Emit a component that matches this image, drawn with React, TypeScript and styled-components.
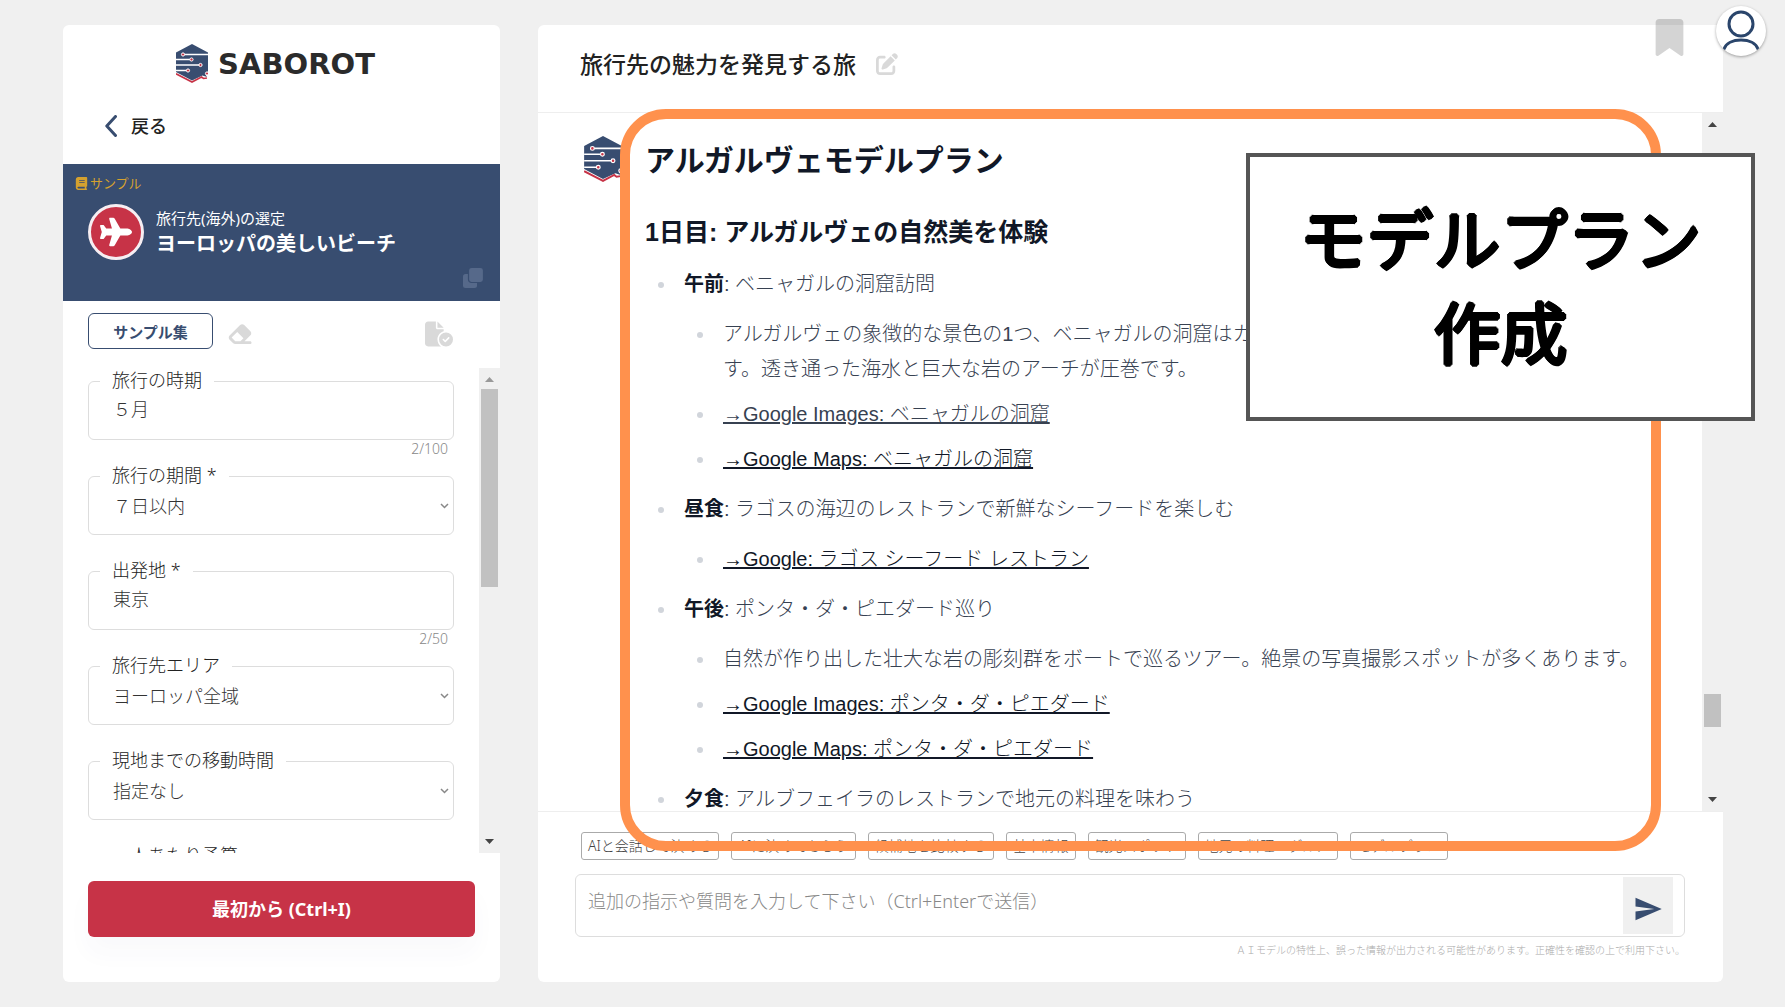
import React from "react";
import styled, { createGlobalStyle, css } from "styled-components";
import {
  FaBook,
  FaBookmark,
  FaEraser,
  FaFileCircleCheck,
  FaPenToSquare,
  FaPlane,
} from "react-icons/fa6";
import { MdSend } from "react-icons/md";

const NAVY = "#384d70";
const RED = "#c73347";
const PAGE = "#f0f0f0";
const UI_FONT = `"Noto Sans", "Noto Sans CJK JP", sans-serif`;
const CHAT_FONT = `"Liberation Sans", "Noto Sans CJK JP", sans-serif`;

const GlobalStyle = createGlobalStyle`
  *, *::before, *::after { box-sizing: border-box; }
  body {
    margin: 0;
    background: ${PAGE};
    font-family: ${UI_FONT};
    font-weight: 300;
    color: #222;
  }
  button, input, textarea, select {
    font: inherit;
    color: inherit;
    margin: 0;
  }
  button { cursor: pointer; }
`;

const Page = styled.div`
  display: flex;
  gap: 38px;
  height: 100vh;
  padding: 25px 62px 25px 63px;
  overflow: hidden;
`;

/* ---------- Logo ---------- */

const LogoMark = ({ height }: { height: number }) => (
  <svg width={Math.round((height * 32) / 39)} height={height} viewBox="0 0 32 39" aria-hidden="true">
    <path d="M16 0 32 8.500v19l-2.500 3 1.500 2.500-4.500-1.500L16 36.500 0 28V8.500Z" fill={NAVY} />
    <path d="M0 29.800 16 38l9.500-5 2 1.500 3.500-.5" fill="none" stroke={RED} strokeWidth="1.600" />
    <path d="M7 10.500h25M0 15.500h15M0 21h24M0 26.500h11.500" stroke="#fff" strokeWidth="1.300" />
    {[
      [7, 10.5],
      [15.500, 15.5],
      [24.500, 21],
      [12, 26.5],
      [31, 29.5],
    ].map(([cx, cy]) => (
      <circle key={cy} cx={cx} cy={cy} r="1.600" fill={RED} stroke="#fff" strokeWidth="1" />
    ))}
  </svg>
);

const Brand = styled.div`
  display: flex;
  align-items: center;
  justify-content: center;
  gap: 10px;
  padding: 19px 12px 0 0;
`;

const BrandName = styled.span`
  padding-top: 2px;
  font-family: "DejaVu Sans", sans-serif;
  font-size: 29px;
  line-height: 37px;
  font-weight: 700;
  color: #2b2b2b;
`;

/* ---------- Scrollbar ---------- */

const Bar = styled.div`
  display: flex;
  flex-direction: column;
  flex: none;
  width: 21px;
  background: ${PAGE};
  padding: 0 2px;
`;

const BarArrow = styled.svg`
  flex: none;
  width: 17px;
  height: 21px;
`;

const BarSpace = styled.div<{ $grow: number }>`
  flex: ${(p) => p.$grow} 1 0;
`;

const BarThumb = styled(BarSpace)`
  background: #c1c1c1;
`;

const Scrollbar = (props: { before: number; thumb: number; after: number }) => (
  <Bar aria-hidden="true">
    <BarArrow viewBox="0 0 17 21">
      <path d="M4 14h9l-4.500-5z" fill={props.before ? "#444" : "#999"} />
    </BarArrow>
    <BarSpace $grow={props.before} />
    <BarThumb $grow={props.thumb} />
    <BarSpace $grow={props.after} />
    <BarArrow viewBox="0 0 17 21">
      <path d="M4 7h9l-4.500 5z" fill="#444" />
    </BarArrow>
  </Bar>
);

/* ---------- Sidebar ---------- */

const Sidebar = styled.aside`
  display: flex;
  flex-direction: column;
  flex: none;
  width: 437px;
  background: #fff;
  border-radius: 6px;
  overflow: hidden;
`;

const BackLink = styled.a`
  display: flex;
  align-items: center;
  align-self: flex-start;
  gap: 14px;
  margin: 31px 0 26px 42px;
  font-size: 18px;
  line-height: 24px;
  font-weight: 500;
  color: #222;
  text-decoration: none;
`;

const Banner = styled.section`
  display: flex;
  flex-direction: column;
  padding: 11px 17px 13px 12px;
  background: ${NAVY};
  color: #fff;
`;

const Tag = styled.div`
  display: flex;
  align-items: center;
  gap: 2px;
  font-size: 13px;
  line-height: 16px;
  font-weight: 400;
  color: #d5a12f;
`;

const BannerMain = styled.div`
  display: flex;
  align-items: center;
  gap: 12px;
  margin: 13px 0 8px 13px;
`;

const PlaneBadge = styled.div`
  display: grid;
  place-items: center;
  width: 56px;
  height: 56px;
  border: 3px solid #f6eef2;
  border-radius: 50%;
  background: ${RED};
`;

const BannerKind = styled.div`
  font-size: 15px;
  line-height: 24px;
  font-weight: 400;
`;

const BannerTitle = styled.h1`
  margin: 0;
  font-size: 20px;
  line-height: 28px;
  font-weight: 700;
`;

const iconButton = css`
  display: grid;
  place-items: center;
  padding: 0;
  border: 0;
  background: none;
`;

const GhostButton = styled.button`
  ${iconButton}
  color: #d9d9d9;
`;

const CopyButton = styled.button`
  ${iconButton}
  align-self: flex-end;
`;

const Toolbar = styled.div`
  display: flex;
  align-items: center;
  gap: 14px;
  padding: 12px 47px 19px 25px;
`;

const ToolbarIcons = styled.div`
  display: flex;
  flex: 1;
  align-items: center;
  justify-content: space-between;
  padding-top: 6px;
`;

const SampleButton = styled.button`
  width: 125px;
  height: 36px;
  padding: 0;
  border: 1px solid ${NAVY};
  border-radius: 6px;
  background: #fff;
  font-size: 15px;
  font-weight: 700;
  color: ${NAVY};
`;

const FormArea = styled.div`
  display: flex;
  flex: 1;
  min-height: 0;
`;

const Fields = styled.form`
  flex: 1;
  min-width: 0;
  padding: 1px 25px 0;
  overflow: hidden;
`;

const Field = styled.div`
  height: 95px;
`;

const FieldBox = styled.fieldset`
  height: 71px;
  margin: 0;
  padding: 0;
  border: 1px solid #ddd;
  border-radius: 6px;
`;

const Legend = styled.legend`
  height: 24px;
  margin-left: 11px;
  padding: 0 12px;
  font-size: 18px;
  line-height: 22px;
`;

const inputText = css`
  display: block;
  width: 100%;
  border: 0;
  outline: 0;
  background: transparent;
  font-size: 18px;
  line-height: 24px;
  color: #333;
`;

const TextInput = styled.input`
  ${inputText}
  height: 24px;
  margin-top: 4px;
  padding: 0 24px;
`;

const SelectWrap = styled.div`
  display: grid;
  align-items: center;
  margin-top: 6px;
  > * {
    grid-area: 1 / 1;
  }
`;

const Select = styled.select`
  ${inputText}
  height: 24px;
  padding: 0 24px;
  appearance: none;
`;

const Chevron = styled.svg`
  justify-self: end;
  margin-right: 4px;
  pointer-events: none;
`;

const Counter = styled.div`
  padding-right: 6px;
  font-size: 14px;
  line-height: 18px;
  text-align: right;
  color: #888;
`;

const ResetButton = styled.button`
  flex: none;
  height: 56px;
  margin: 28px 25px 45px;
  padding: 0 0 2px;
  border: 0;
  border-radius: 6px;
  background: ${RED};
  box-shadow: 0 16px 24px rgba(56, 77, 112, 0.03);
  font-size: 18px;
  font-weight: 700;
  color: #fff;
`;

type FieldDef = { id: string; label: string; value: string; select?: boolean; count?: string };

const FIELDS: FieldDef[] = [
  { id: "season", label: "旅行の時期", value: "５月", count: "2/100" },
  { id: "period", label: "旅行の期間 *", value: "７日以内", select: true },
  { id: "origin", label: "出発地 *", value: "東京", count: "2/50" },
  { id: "area", label: "旅行先エリア", value: "ヨーロッパ全域", select: true },
  { id: "transit", label: "現地までの移動時間", value: "指定なし", select: true },
  { id: "budget", label: "一人あたり予算", value: "指定なし", select: true },
];

const FormField = ({ id, label, value, select, count }: FieldDef) => (
  <Field>
    <FieldBox>
      <Legend>
        <label htmlFor={id}>{label}</label>
      </Legend>
      {select ? (
        <SelectWrap>
          <Select id={id} defaultValue={value}>
            <option>{value}</option>
          </Select>
          <Chevron width="9" height="6" viewBox="0 0 9 6">
            <path d="M1 1l3.500 3.500L8 1" fill="none" stroke="#888" strokeWidth="1.500" />
          </Chevron>
        </SelectWrap>
      ) : (
        <TextInput id={id} defaultValue={value} />
      )}
    </FieldBox>
    {count && <Counter>{count}</Counter>}
  </Field>
);

/* ---------- Chat panel ---------- */

const Panel = styled.main`
  display: flex;
  flex-direction: column;
  flex: 1;
  min-width: 0;
  background: #fff;
  border-radius: 6px;
  overflow: hidden;
`;

const PanelHeader = styled.header`
  display: flex;
  align-items: center;
  gap: 20px;
  flex: none;
  height: 88px;
  padding: 0 42px 9px;
  border-bottom: 1px solid #eee;
`;

const PanelTitle = styled.h2`
  margin: 0;
  font-size: 23px;
  line-height: 32px;
  font-weight: 500;
`;

const Thread = styled.div`
  display: flex;
  flex: 1;
  min-height: 0;
`;

const Message = styled.article`
  display: flex;
  align-items: flex-start;
  gap: 23px;
  flex: 1;
  min-width: 0;
  padding: 23px 40px 0 46px;
  overflow: hidden;
  > svg {
    flex: none;
  }
`;

const Prose = styled.div`
  flex: 1;
  min-width: 0;
  padding-top: 5px;
  font-family: ${CHAT_FONT};
  font-size: 20px;
  line-height: 35px;
  color: #374151;

  h2,
  h3 {
    margin: 0;
    line-height: 40px;
    font-weight: 700;
    color: #111827;
  }
  h2 {
    font-size: 30px;
  }
  h3 {
    margin: 31px 0 15px;
    font-size: 25px;
  }
  strong {
    font-weight: 700;
    color: #111827;
  }
`;

const List = styled.ul`
  margin: 0;
  padding-left: 32px;
  list-style-type: disc;
  > li {
    padding-left: 7px;
  }
  > li + li {
    margin-top: 15px;
  }
  li::marker {
    color: #d1d5db;
  }
`;

const SubList = styled(List)`
  margin-top: 15px;
  > li + li {
    margin-top: 10px;
  }
`;

const MapLink = styled.a<{ $soft?: boolean }>`
  color: ${(p) => (p.$soft ? "#374151" : "#111827")};
  text-decoration: underline;
`;

const Composer = styled.footer`
  flex: none;
  height: 171px;
  padding: 20px 38px 0 37px;
  border-top: 1px solid #eee;
`;

const Chips = styled.div`
  display: flex;
  gap: 12px;
  padding-left: 6px;
`;

const Chip = styled.button`
  height: 28px;
  padding: 0 6px;
  border: 1px solid #aaa;
  border-radius: 3px;
  background: #fff;
  font-size: 14px;
  line-height: 24px;
  white-space: nowrap;
  color: #444;
`;

const InputBox = styled.div`
  display: flex;
  margin-top: 14px;
  height: 63px;
  padding: 2px 11px 2px 0;
  border: 1px solid #ddd;
  border-radius: 6px;
`;

const Prompt = styled.textarea`
  ${inputText}
  flex: 1;
  padding: 12px;
  font-size: 18px;
  resize: none;
  &::placeholder {
    color: #888;
  }
`;

const SendButton = styled.button`
  ${iconButton}
  width: 50px;
  padding-top: 6px;
  background: ${PAGE};
  color: ${NAVY};
`;

const Notice = styled.p`
  margin: 5px 0 0;
  font-size: 10px;
  line-height: 16px;
  text-align: right;
  color: #aaa;
`;

const CHIPS = [
  "AIと会話して決める",
  "AIに決めてもらう",
  "候補地を比較する",
  "基本情報",
  "観光スポット",
  "地元の料理・グルメ",
  "モデルプラン",
];

/* ---------- Overlays ---------- */

const AccountBar = styled.div`
  position: absolute;
  top: 6px;
  right: 19px;
  display: flex;
  align-items: center;
  gap: 28px;
`;

const BookmarkButton = styled.button`
  ${iconButton}
  color: rgba(0, 0, 0, 0.17);
  padding-top: 12px;
`;

const AvatarButton = styled.button`
  ${iconButton}
  width: 50px;
  height: 50px;
  border-radius: 50%;
  background: #fff;
  box-shadow: 0 1px 3px rgba(0, 0, 0, 0.35);
  overflow: hidden;
`;

const HighlightFrame = styled.div`
  position: absolute;
  top: 109px;
  right: 124px;
  bottom: 156px;
  left: 620px;
  border: 10px solid #ff914d;
  border-radius: 46px;
  pointer-events: none;
`;

/* The ring of shadows thickens the strokes and rounds their ends. */
const Callout = styled.div`
  position: absolute;
  top: 153px;
  right: 30px;
  width: 509px;
  padding: 32px 0 40px;
  border: 4px solid #555;
  background: #fff;
  font-family: "Noto Sans CJK JP", sans-serif;
  font-size: 67px;
  line-height: 94px;
  font-weight: 400;
  text-align: center;
  color: #000;
  text-shadow: 2px 0 #000, -2px 0 #000, 0 2px #000, 0 -2px #000,
    1px 1px #000, -1px 1px #000, 1px -1px #000, -1px -1px #000;
`;

export default function App() {
  return (
    <>
      <GlobalStyle />
      <Page>
        <Sidebar>
          <Brand>
            <LogoMark height={39} />
            <BrandName>SABOROT</BrandName>
          </Brand>
          <BackLink href="#back">
            <svg width="12" height="22" viewBox="0 0 12 22" aria-hidden="true">
              <path d="M10.500 1.500 1.800 11l8.700 9.500" fill="none" stroke={NAVY} strokeWidth="3" strokeLinecap="round" strokeLinejoin="round" />
            </svg>
            戻る
          </BackLink>
          <Banner>
            <Tag>
              <FaBook size={13} />
              サンプル
            </Tag>
            <BannerMain>
              <PlaneBadge>
                <FaPlane size={32} />
              </PlaneBadge>
              <div>
                <BannerKind>旅行先(海外)の選定</BannerKind>
                <BannerTitle>ヨーロッパの美しいビーチ</BannerTitle>
              </div>
            </BannerMain>
            <CopyButton type="button" aria-label="コピー">
              <svg width="20" height="20" viewBox="0 0 20 20">
                <rect x="0" y="6" width="14" height="14" rx="2.500" fill="#56698a" />
                <rect x="5.500" y="-0.500" width="15" height="15" rx="3" fill="#56698a" stroke={NAVY} strokeWidth="1.200" />
              </svg>
            </CopyButton>
          </Banner>
          <Toolbar>
            <SampleButton type="button">サンプル集</SampleButton>
            <ToolbarIcons>
              <GhostButton type="button" aria-label="クリア">
                <FaEraser size={26} />
              </GhostButton>
              <GhostButton type="button" aria-label="保存">
                <FaFileCircleCheck size={28} />
              </GhostButton>
            </ToolbarIcons>
          </Toolbar>
          <FormArea>
            <Fields>
              {FIELDS.map((f) => (
                <FormField key={f.id} {...f} />
              ))}
            </Fields>
            <Scrollbar before={0} thumb={198} after={245} />
          </FormArea>
          <ResetButton type="button">最初から (Ctrl+I)</ResetButton>
        </Sidebar>

        <Panel>
          <PanelHeader>
            <PanelTitle>旅行先の魅力を発見する旅</PanelTitle>
            <GhostButton type="button" aria-label="編集">
              <FaPenToSquare size={22} />
            </GhostButton>
          </PanelHeader>
          <Thread>
            <Message>
              <LogoMark height={46} />
              <Prose>
                <h2>アルガルヴェモデルプラン</h2>
                <h3>1日目: アルガルヴェの自然美を体験</h3>
                <List>
                  <li>
                    <strong>午前</strong>: ベニャガルの洞窟訪問
                    <SubList>
                      <li>
                        アルガルヴェの象徴的な景色の1つ、ベニャガルの洞窟はカヤックやボートツアーで訪れることができます。透き通った海水と巨大な岩のアーチが圧巻です。
                      </li>
                      <li>
                        <MapLink href="#images-benagil" $soft>→Google Images: ベニャガルの洞窟</MapLink>
                      </li>
                      <li>
                        <MapLink href="#maps-benagil">→Google Maps: ベニャガルの洞窟</MapLink>
                      </li>
                    </SubList>
                  </li>
                  <li>
                    <strong>昼食</strong>: ラゴスの海辺のレストランで新鮮なシーフードを楽しむ
                    <SubList>
                      <li>
                        <MapLink href="#lagos">→Google: ラゴス シーフード レストラン</MapLink>
                      </li>
                    </SubList>
                  </li>
                  <li>
                    <strong>午後</strong>: ポンタ・ダ・ピエダード巡り
                    <SubList>
                      <li>自然が作り出した壮大な岩の彫刻群をボートで巡るツアー。絶景の写真撮影スポットが多くあります。</li>
                      <li>
                        <MapLink href="#images-piedade">→Google Images: ポンタ・ダ・ピエダード</MapLink>
                      </li>
                      <li>
                        <MapLink href="#maps-piedade">→Google Maps: ポンタ・ダ・ピエダード</MapLink>
                      </li>
                    </SubList>
                  </li>
                  <li>
                    <strong>夕食</strong>: アルブフェイラのレストランで地元の料理を味わう
                  </li>
                </List>
              </Prose>
            </Message>
            <Scrollbar before={561} thumb={33} after={63} />
          </Thread>
          <Composer>
            <Chips>
              {CHIPS.map((c) => (
                <Chip key={c} type="button">
                  {c}
                </Chip>
              ))}
            </Chips>
            <InputBox>
              <Prompt aria-label="追加の指示や質問" placeholder="追加の指示や質問を入力して下さい（Ctrl+Enterで送信）" />
              <SendButton type="button" aria-label="送信">
                <MdSend size={30} />
              </SendButton>
            </InputBox>
            <Notice>ＡＩモデルの特性上、誤った情報が出力される可能性があります。正確性を確認の上で利用下さい。</Notice>
          </Composer>
        </Panel>
      </Page>

      <HighlightFrame />
      <Callout>
        モデルプラン
        <br />
        作成
      </Callout>
      <AccountBar>
        <BookmarkButton type="button" aria-label="ブックマーク">
          <FaBookmark size={37} />
        </BookmarkButton>
        <AvatarButton type="button" aria-label="アカウント">
          <svg width="50" height="50" viewBox="0 0 50 50" fill="none" stroke="#2a456b" strokeWidth="3">
            <circle cx="25" cy="18" r="12" />
            <path d="M8 43c2-6 9-9 17-9s15 3 17 9" strokeLinecap="round" />
          </svg>
        </AvatarButton>
      </AccountBar>
    </>
  );
}
